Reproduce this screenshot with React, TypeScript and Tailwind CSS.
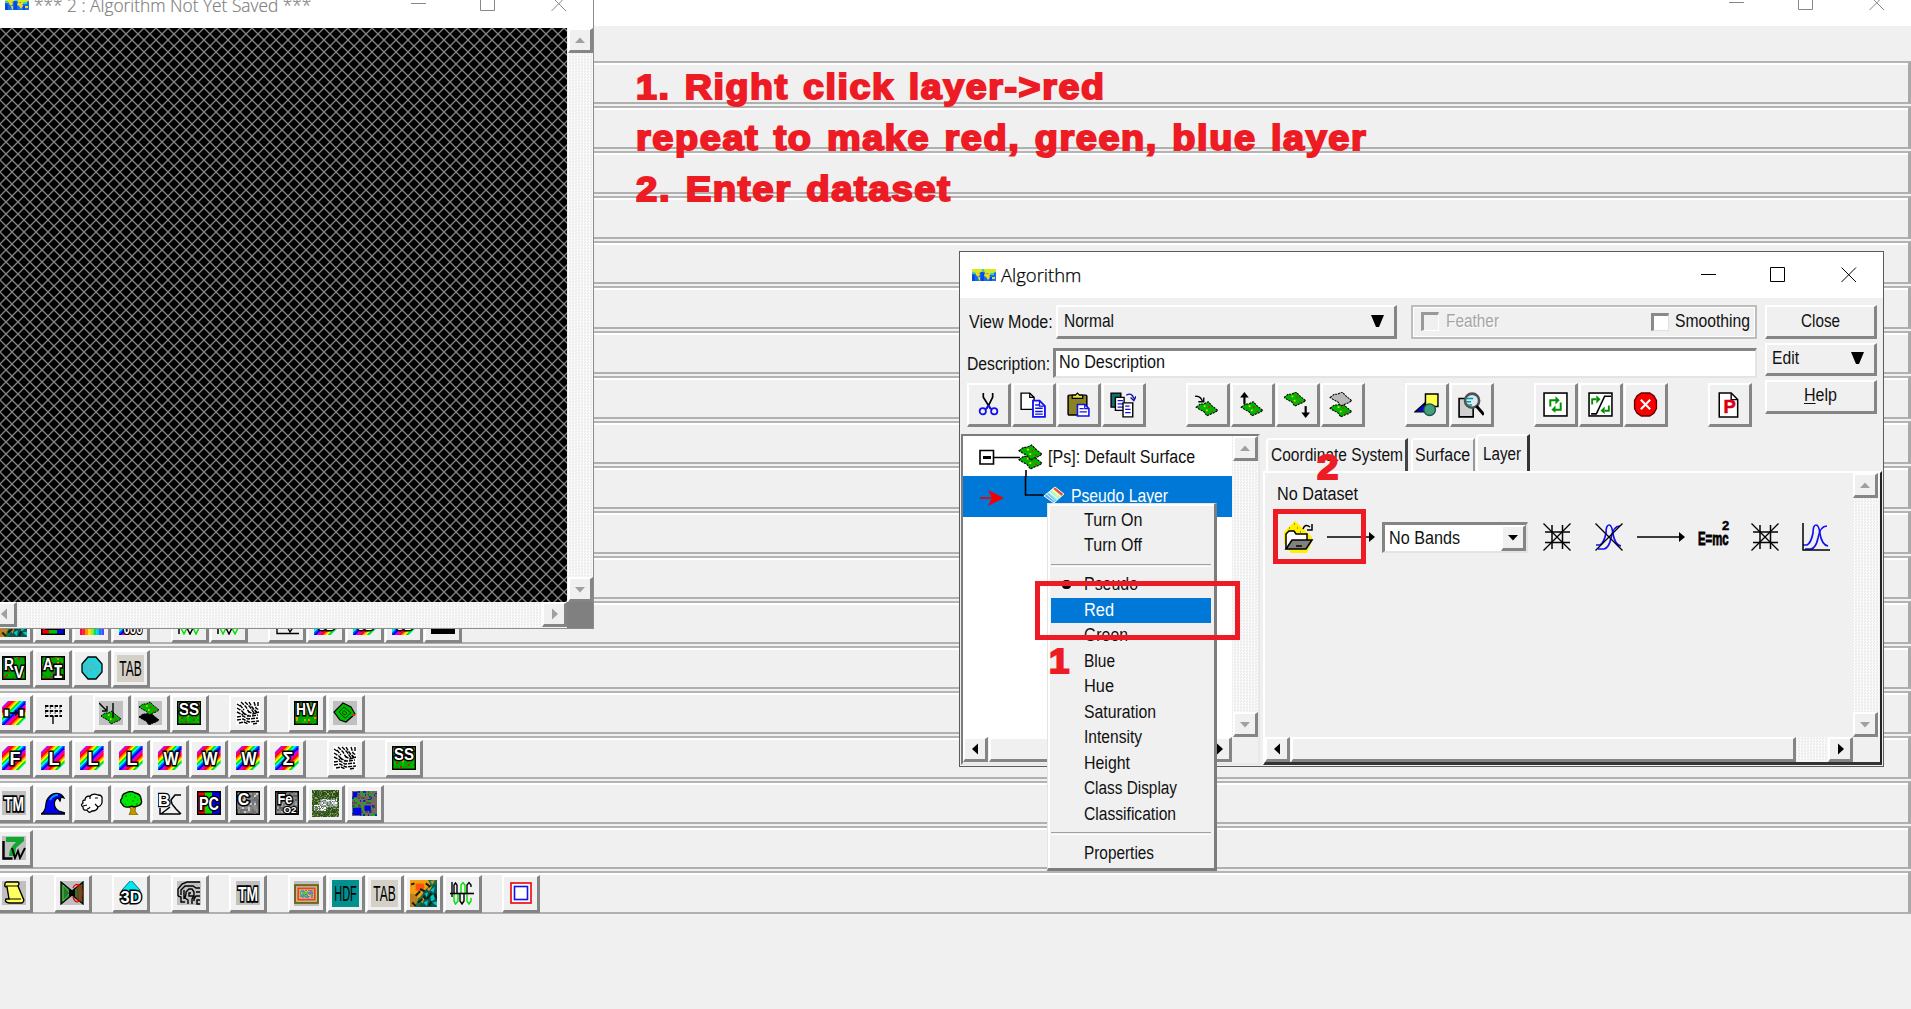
import React, { useLayoutEffect, useRef, useState } from "react";

const RAISED = "bg-[#f0f0f0] border-t-2 border-l-2 border-b-[3px] border-r-[3px] border-t-white border-l-white border-b-[#858585] border-r-[#858585]";
const TRACK = "bg-[repeating-conic-gradient(#fafafa_0%_25%,#ececec_0%_50%)] bg-[length:3px_3px]";

/** A line of text stretched or squeezed to a given width. */
function Fit({ w, children, className = "" }: { w: number; children: React.ReactNode; className?: string }) {
  const ref = useRef<HTMLSpanElement>(null);
  const [s, setS] = useState(1);
  useLayoutEffect(() => {
    if (ref.current) setS(w / ref.current.offsetWidth);
  }, [w]);
  return (
    <span className={"block shrink-0 whitespace-nowrap " + className} style={{ width: w }}>
      <span ref={ref} className="inline-block origin-left" style={{ transform: `scaleX(${s})` }}>
        {children}
      </span>
    </span>
  );
}

function rng(seed: number) {
  let a = seed;
  return () => {
    a = (a * 1664525 + 1013904223) % 4294967296;
    return a / 4294967296;
  };
}

function Noise({ colors, seed = 1, x = 0, y = 0, w = 24, h = 24, step = 2 }: { colors: string[]; seed?: number; x?: number; y?: number; w?: number; h?: number; step?: number }) {
  const r = rng(seed * 7919);
  const out: React.ReactNode[] = [];
  for (let j = 0; j < h; j += step)
    for (let i = 0; i < w; i += step)
      out.push(<rect key={`${i}-${j}`} x={x + i} y={y + j} width={step} height={step} fill={colors[Math.floor(r() * colors.length)]} />);
  return <g shapeRendering="crispEdges">{out}</g>;
}

function Svg({ children, s = 24, className = "" }: { children: React.ReactNode; s?: number; className?: string }) {
  return (
    <svg width={s} height={s} viewBox="0 0 24 24" fill="none" className={"block shrink-0 " + className}>
      {children}
    </svg>
  );
}

function Glyph({ x = 12, y = 19, size = 18, children, fill = "#fff", stroke = "#000", sw = 3, w, mono = false }: { x?: number; y?: number; size?: number; children: string; fill?: string; stroke?: string; sw?: number; w?: number; mono?: boolean }) {
  return (
    <text x={x} y={y} fontSize={size} textAnchor="middle" fontWeight="700" fontFamily={mono ? "DejaVu Sans Mono, monospace" : "Liberation Sans, sans-serif"} fill={fill} stroke={stroke} strokeWidth={sw} paintOrder="stroke" strokeLinejoin="miter" textLength={w} lengthAdjust="spacingAndGlyphs">
      {children}
    </text>
  );
}

const GREENS = ["#00a800", "#00b000", "#009a00", "#00a800", "#10b800", "#00a800", "#00a000", "#00a800", "#c8a000", "#00a800", "#00a800", "#a03000"];

function GreenBox({ a, b, seed = 1 }: { a: string; b: string; seed?: number }) {
  const pair = a + b;
  const staggered = pair === "RV" || pair === "AI";
  return (
    <Svg>
      <Noise colors={GREENS} seed={seed} />
      <rect x=".7" y=".7" width="22.6" height="22.6" stroke="#000" strokeWidth="1.4" />
      <Glyph x={7} y={14} size={17} w={10}>{a}</Glyph>
      <Glyph x={17} y={staggered ? 22 : 14} size={17} w={b === "I" ? undefined : 10} mono={b === "I"}>{b}</Glyph>
    </Svg>
  );
}

const HUES = ["#ff0000", "#ff9000", "#ffff00", "#00e000", "#00ffff", "#0060ff", "#0000e0", "#c000ff", "#ff0080"];

function Stripes() {
  return (
    <g strokeWidth="2.5">
      {Array.from({ length: 23 }, (_, i) => (
        <line key={i} x1={i * 2.3 - 27} y1="25" x2={i * 2.3 - 1} y2="-1" stroke={HUES[(i + 3) % HUES.length]} />
      ))}
    </g>
  );
}

function Rainbow({ t, small = false }: { t?: string; small?: boolean }) {
  return (
    <Svg className="[clip-path:polygon(28%_0,100%_0,100%_72%,72%_100%,0_100%,0_28%)]">
      <Stripes />
      {t && <Glyph x={13} y={19} size={small ? 13 : 18} w={t === "W" ? 15 : undefined}>{t}</Glyph>}
      {!t && (
        <g>
          <path d="M2 8h5v8H2zM17 8h5v8h-5z" fill="#fff" stroke="#000" strokeWidth="1.4" />
          <path d="M8 12h8M13 9.5l3 2.5-3 2.5" stroke="#000" strokeWidth="1.4" />
        </g>
      )}
    </Svg>
  );
}

function Ripples() {
  return (
    <Svg>
      <rect width="24" height="24" fill="#fff" />
      <g stroke="#000" strokeWidth="1.4" strokeDasharray="4 1">
        <path d="M1 3l3 2M1 7l5 3 3 4M1 11l6 3M5 1l5 5 4 7M9 1l5 5 4 6M13 1l3 5 5 6M18 1l2 6 3 2M22 1v4" />
        <path d="M1 16l6-1 5 3 10-1M1 19l6-1 6 3 10-1M3 22l5-1 4 2M11 15l5 0 6-1M7 12l6 3M12 10l5 3 6-2M17 23l5-1M4 4l4 5M19 9l3 4" />
      </g>
    </Svg>
  );
}

const slab = (x: number, y: number) => `M${x} ${y + 5}l4-3 3 0 4-2 4 4 5 4-3 2-3 1-4 2-3-4-4-2z`;

function Slab({ x, y, fill = "#00b400" }: { x: number; y: number; fill?: string }) {
  return (
    <g>
      <path d={slab(x, y)} fill={fill} stroke="#000" strokeWidth="1" strokeDasharray="2 .8" />
      {fill === "#00b400" && (
        <g>
          <path d={`M${x + 7} ${y + 4}h1.6M${x + 9} ${y + 8}h1.6`} stroke="#e8e000" strokeWidth="1.5" />
          <path d={`M${x + 11} ${y + 5}h1.6M${x + 14} ${y + 9}h1.6`} stroke="#c03000" strokeWidth="1.5" />
        </g>
      )}
    </g>
  );
}

function Tab({ t, bg }: { t: string; bg: string }) {
  return (
    <Svg s={27}>
      <rect width="24" height="24" fill={bg} />
      <text x="2" y="18.500" fontSize="19" fontFamily="Liberation Sans, sans-serif" fill="#000" textLength="20" lengthAdjust="spacingAndGlyphs">{t}</text>
    </Svg>
  );
}

function Wave({ low = false }: { low?: boolean }) {
  return (
    <Svg>
      {low ? (
        <g strokeWidth="1.5">
          <path d="M2 15v8" stroke="#000" />
          <path d="M3 15l4 8 4-8" stroke="#00e000" />
          <path d="M9 15l4 8 4-8" stroke="#000" />
          <path d="M15 15l4 8 4-8" stroke="#00e000" />
        </g>
      ) : (
        <g strokeWidth="1.400">
          <path d="M2 1v15" stroke="#000" />
          <path d="M4 12V4l1.500-2L7 4v8M10 12v8l2 3 2-3v-8M17 12V4l2-2.500 2 2.500v2" stroke="#000" />
          <path d="M4 12v8l1.500 3L8 20v-8M11 12V4l2-2.500L15 4v8M17 12v8l2 3 2-3v-3" stroke="#00e000" />
          <path d="M0 12.500h24" stroke="#000" strokeWidth="1.6" />
        </g>
      )}
    </Svg>
  );
}

const I: Record<string, React.ReactNode> = {
  rv: <GreenBox a="R" b="V" seed={2} />,
  ai: <GreenBox a="A" b="I" seed={3} />,
  ss: <GreenBox a="S" b="S" seed={4} />,
  hv: <GreenBox a="H" b="V" seed={5} />,
  octo: (
    <Svg>
      <path d="M8 1h8l6 7v8l-6 7H8l-6-7V8z" fill="#20d4dc" />
      <Noise x={4} y={5} w={16} h={14} step={1} colors={["#10e0e8", "#50b8c0"]} seed={8} />
      <path d="M8 1h8l6 7v8l-6 7H8l-6-7V8z" stroke="#000" strokeWidth="1.3" />
    </Svg>
  ),
  tab: <Tab t="TAB" bg="#d4d0c8" />,
  hdf: <Tab t="HDF" bg="#009090" />,
  shift: <Rainbow />,
  dots: (
    <Svg>
      <path d="M4 5h17M4 10h17M4 15h17" stroke="#000" strokeWidth="1.8" strokeDasharray="3.4 1.4" />
      <path d="M4 7h17M4 12h17" stroke="#000" strokeWidth="1.2" strokeDasharray="1.2 3.6" />
      <path d="M12 15v8" stroke="#000" strokeWidth="1.4" />
    </Svg>
  ),
  drop: (
    <Svg>
      <rect width="24" height="24" fill="#c0c0c0" />
      <Slab x={2} y={10} />
      <path d="M0 2l7 7M8 5v5H3M14 2v15" stroke="#000" strokeWidth="1.4" />
    </Svg>
  ),
  shadow: (
    <Svg>
      <rect width="24" height="24" fill="#c0c0c0" />
      <Slab x={1} y={11} fill="#000" />
      <Slab x={1} y={1} />
    </Svg>
  ),
  ripple: <Ripples />,
  diamond: (
    <Svg>
      <rect width="24" height="24" fill="#c0c0c0" />
      <path d="M10 2l8 4 4 7-9 8-6-2-6-8z" fill="#00b800" stroke="#000" strokeWidth="1.2" />
      <path d="M11 6l7 6-6 5-6-6z" stroke="#003800" strokeWidth="1" />
      <path d="M11 9.500l3 2.500-2 2-3-2z" stroke="#003800" strokeWidth=".8" />
      <path d="M19 14h3" stroke="#c04000" strokeWidth="2" />
    </Svg>
  ),
  F: <Rainbow t="F" />,
  L: <Rainbow t="L" />,
  W: <Rainbow t="W" />,
  S: <Rainbow t="Σ" />,
  D: <Rainbow t="JD" small />,
  tm: (
    <Svg>
      <rect width="24" height="24" fill="#c0c0c0" />
      <Glyph x={12} y={20} size={20} sw={3.4} w={20}>TM</Glyph>
    </Svg>
  ),
  wave: (
    <Svg>
      <path d="M0 23C8 18 2 12 8 6C12 1 20 1 23 7L20 6L19 10L17 7C12 9 12 17 18 20L24 22V23Z" fill="#0000f0" stroke="#000" strokeWidth="1.3" />
      <path d="M9 9q3-5 8-5" stroke="#0090ff" strokeWidth="2" />
    </Svg>
  ),
  cloud: (
    <Svg>
      <path d="M5 9q0-4 5-4 3-3 8-1 5 0 4 5 1 5-4 7-1 4-6 4-3 3-5-1-4 1-4-3-3-2 0-4-1-3 2-3z" fill="#fff" stroke="#000" strokeWidth="1.3" />
      <path d="M10 5v3M18 16l-3-3M7 18q2 0 3-2M15 7h3M3 15l4-1" stroke="#000" strokeWidth="1.2" />
    </Svg>
  ),
  tree: (
    <Svg>
      <path d="M10 15l2 4-2 5h9l-3-4 1-5z" fill="#c09800" stroke="#605000" strokeWidth=".7" />
      <path d="M7 2q5-3 9 0 6 1 6 6 2 5-3 7l-4 1-2-1-3 1q-5 1-7-3-3-3 0-6 0-4 4-5z" fill="#00e800" stroke="#000" strokeWidth="1.3" />
      <path d="M6 5h2M11 4h1M15 6h2M8 9h1M13 10h2M18 9h1M6 13h1M17 13h2" stroke="#007000" strokeWidth="1.2" />
    </Svg>
  ),
  bc: (
    <Svg>
      <Glyph x={6} y={15} size={17} sw={2.6}>B</Glyph>
      <path d="M23 4h-6l-4 5 1 4 4 5 5 5M2 17v6h20M3 23l9-7" stroke="#000" strokeWidth="1.5" />
    </Svg>
  ),
  pc: (
    <Svg>
      <rect x="1" y="1" width="7" height="22" fill="#f00000" />
      <rect x="8" y="1" width="7" height="22" fill="#00e000" />
      <rect x="15" y="1" width="8" height="22" fill="#0000f0" />
      <rect x=".7" y=".7" width="22.6" height="22.6" stroke="#000" strokeWidth="1.5" />
      <Glyph x={12} y={19} size={19} w={20}>PC</Glyph>
    </Svg>
  ),
  c: (
    <Svg>
      <Noise colors={["#808080", "#909090", "#707070", "#c8c8c8", "#888888"]} seed={11} />
      <rect x=".7" y=".7" width="22.6" height="22.6" stroke="#000" strokeWidth="1.5" />
      <Glyph x={7.5} y={13.5} size={16}>C</Glyph>
    </Svg>
  ),
  fe: (
    <Svg>
      <Noise colors={["#808080", "#909090", "#606060", "#a8a8a8"]} seed={12} />
      <rect x=".7" y=".7" width="22.6" height="22.6" stroke="#000" strokeWidth="1.5" />
      <Glyph x={10} y={13} size={15} w={15}>Fe</Glyph>
      <Glyph x={15} y={22} size={9} w={13} sw={2.2}>O2</Glyph>
    </Svg>
  ),
  photo: (
    <Svg s={27}>
      <Noise step={1} colors={["#2c4a1c", "#3c6a20", "#507038", "#385818", "#2c4a1c", "#88a070"]} seed={13} />
      <Noise x={2} y={13} w={10} h={6} step={1} colors={["#d8d8e0", "#607848", "#ffffff", "#8898a8"]} seed={19} />
      <Noise x={7} y={8} w={15} h={7} step={1} colors={["#c8c8d8", "#607848", "#ffffff", "#8898a8", "#a0b0b0"]} seed={21} />
    </Svg>
  ),
  classes: (
    <Svg s={25}>
      <Noise colors={["#706868", "#806858", "#00c000", "#505058", "#707058", "#2020c0", "#806060"]} seed={14} step={1.5} />
      <path d="M1 16h8v7H1zM12 14h6v5h-6zM1 1h4v5H1z" fill="#0000f0" />
    </Svg>
  ),
  seven: (
    <Svg>
      <rect width="24" height="24" fill="#c0c0c0" />
      <path d="M4 1h18v4l-8 7-1 8-6 0q0-8 7-14H4z" fill="#10a830" />
      <path d="M1.5 5v17.500h9" stroke="#000" strokeWidth="2.4" />
      <path d="M10 12l3 10 3-7 2 7 5-10" stroke="#000" strokeWidth="1.900" />
    </Svg>
  ),
  scroll: (
    <Svg>
      <rect width="24" height="24" fill="#c0c0c0" />
      <path d="M3 3q0-2 2-2h11q2 1 0 4l5 12q2 3-1 5H7q-5-1-3-4h3L5 6Q2 6 3 3z" fill="#ffff60" stroke="#000" strokeWidth="1.4" />
      <path d="M4 5h12M7 18h12" stroke="#000" strokeWidth="1.2" />
    </Svg>
  ),
  bow: (
    <Svg>
      <rect width="24" height="24" fill="#c0c0c0" />
      <path d="M1 1l11 9L23 1v22l-11-9L1 23z" fill="#20782c" stroke="#000" strokeWidth="1.2" />
      <path d="M3 4v16l7-8zM9 9l6 6" stroke="#60c040" strokeWidth="1" />
      <path d="M9 9h6v6H9z" fill="#000" />
      <path d="M13 7q2-5 6-3 4 4 3 10-1 7-5 7-3-1-4-5M18 4v17" stroke="#f00000" strokeWidth="1.2" />
    </Svg>
  ),
  three: (
    <Svg>
      <path d="M12-1l9 10v10H3V9z" fill="#00e8f0" stroke="#007080" strokeWidth="1" />
      <Glyph x={12} y={22} size={17} w={21}>3D</Glyph>
    </Svg>
  ),
  head: (
    <Svg>
      <rect width="24" height="24" fill="#c0c0c0" />
      <path d="M1 15V8l4-5 5-2h13M4 14V9l4-4h8l3 2h4M1 15l3 1v5h4M9 13l-1 4 3 2v4M9 13v-2l3-3h3l2 3v4h-5v-3h2M19 11h4M17 15l-2 3v5M23 15h-4l-2 3v2M23 19h-3v4h3M7 9v9" stroke="#000" strokeWidth="1.400" />
    </Svg>
  ),
  frame: (
    <Svg s={25}>
      <rect width="24" height="24" fill="#c0c0c0" />
      <rect x="1" y="4" width="22" height="17" fill="#c8c8a0" stroke="#706820" strokeWidth="2" />
      <rect x="4" y="7" width="16" height="11" fill="#e0a080" stroke="#f04020" strokeWidth="1.6" />
      <Noise x={6} y={9} w={12} h={7} step={1} colors={["#60c040", "#e8c040", "#a060c0", "#40a0c0"]} seed={16} />
    </Svg>
  ),
  relief: (
    <Svg s={27}>
      <rect width="24" height="24" fill="#187048" />
      <path d="M0 0h16l2 4-5 6-4 5-4 3-5-2z" fill="#f0a010" />
      <path d="M5 3l7 0 1 4-4 3-4-1z" fill="#ff5010" />
      <path d="M0 12l6 1 1 5-3 6H0z" fill="#c08020" />
      <path d="M12 10l5-4 7-3v21H8l3-6z" fill="#0c5850" />
      <path d="M18 1l4-1-2 4zM15 8l5-3-3 5zM9 17l4-1-2 5z" fill="#e09020" />
      <path d="M13 12l3-1-1 4zM18 9l4-3-1 5zM12 20l4-2-1 5zM18 14l3-1 1 4-3 2zM20 20l4-1v4z" fill="#00c8c8" />
      <path d="M1 4l3-1M9 8l4 2M5 14l4-4M14 3l4 3M7 20l4-3M15 17l4-5M22 12l2 5M17 23l2-4M2 20l3 3M12 14l2 3" stroke="#102010" strokeWidth="1.800" />
    </Svg>
  ),
  sine: <Wave />,
  sine2: <Wave low />,
  squares: (
    <Svg>
      <rect x="2" y="2" width="20" height="20" fill="#fff" stroke="#f01010" strokeWidth="1.7" />
      <rect x="5.500" y="5.500" width="13" height="13" stroke="#1010f0" strokeWidth="1.6" />
    </Svg>
  ),
  rgb: (
    <Svg>
      <rect width="24" height="24" fill="#0000e0" />
      <rect width="10" height="24" fill="#f00000" />
      <rect x="8" y="17" width="8" height="6" fill="#00c000" />
      <rect x="5" y="5" width="14" height="13" fill="#fff" stroke="#000" strokeWidth="2" />
      <rect x=".7" y=".7" width="22.600" height="22.600" stroke="#000" strokeWidth="1.400" />
    </Svg>
  ),
  spec: (
    <Svg>
      {["#ff0060", "#ff3000", "#ff9000", "#ffe000", "#a0f000", "#00e060", "#00d0e0", "#0080ff", "#6040ff"].map((c, i) => (
        <rect key={c} x={i * 2.7} width="2.8" height="24" fill={c} />
      ))}
    </Svg>
  ),
  ooo: (
    <Svg>
      <Stripes />
      <rect x="12" width="12" height="24" fill="#f0f0f0" />
      <Glyph x={14} y={23} size={16} w={19} sw={2.5}>000</Glyph>
    </Svg>
  ),
  vee: (
    <Svg>
      <path d="M2 0v22.500h22M10 12l5 9 6-9" stroke="#000" strokeWidth="1.400" />
    </Svg>
  ),
  black: (
    <Svg>
      <rect width="24" height="23" fill="#000" />
    </Svg>
  ),
};

const NO_ICONS: string[] = [];
const ROWS: string[][] = [
  ...Array.from({ length: 12 }, () => NO_ICONS),
  ["relief", "rgb", "spec", "ooo", "-", "sine2", "sine2", "-", "vee", "D", "D", "D", "black"],
  ["rv", "ai", "octo", "tab"],
  ["shift", "dots", "-", "drop", "shadow", "ss", "-", "ripple", "-", "hv", "diamond"],
  ["F", "L", "L", "L", "W", "W", "W", "S", "-", "ripple", "-", "ss"],
  ["tm", "wave", "cloud", "tree", "bc", "pc", "c", "fe", "photo", "classes"],
  ["seven"],
  ["scroll", "-", "bow", "-", "three", "-", "head", "-", "tm", "-", "frame", "hdf", "tab", "relief", "sine", "-", "squares"],
];

function ToolRow({ items }: { items: string[] }) {
  return (
    <div className="flex h-[45px] flex-col">
      <div className="flex h-[43px] border-t-2 border-r-[3px] border-b-2 border-t-[#b4b4b4] border-r-[#a9a9a9] border-b-[#b0b0b0] shadow-[inset_0_2px_0_#fff]">
        <div className="-ml-[5px] flex gap-px pt-[2px]">
          {items.map((k, i) =>
            k === "-" ? (
              <span key={i} className="w-[18.500px]" />
            ) : (
              <span key={i} className={"flex h-[38px] w-[38px] items-center justify-center overflow-hidden " + RAISED}>
                {I[k]}
              </span>
            ),
          )}
        </div>
      </div>
    </div>
  );
}

function Tri({ d, c = "#a0a0a0" }: { d: "u" | "d" | "l" | "r"; c?: string }) {
  const p = { u: "M1 9L6 3.500l5 5.500z", d: "M1 4l5 5.500L11 4z", l: "M9 .5L3 6l6 5.500z", r: "M4 .5L10 6l-6 5.500z" }[d];
  return (
    <svg width="12" height="12" viewBox="0 0 12 12">
      <path d={p} fill={c} />
    </svg>
  );
}

function SB({ d, c }: { d: "u" | "d" | "l" | "r"; c?: string }) {
  return (
    <span className={"flex h-[25px] w-[25px] shrink-0 items-center justify-center " + RAISED}>
      <Tri d={d} c={c} />
    </span>
  );
}

function Down() {
  return (
    <svg width="13" height="12" viewBox="0 0 13 12">
      <path d="M0 0h13L8 12H5z" fill="#000" />
    </svg>
  );
}

function WinButtons({ color }: { color: string }) {
  return (
    <svg width="156" height="16" viewBox="0 0 156 16" fill="none" stroke={color} strokeWidth="1" className="block">
      <path d="M0 7.500h15M69.500.5h14v14h-14zM140.500.5l14.500 14.500M155 .5L140.500 15" />
    </svg>
  );
}

function Globe() {
  return (
    <svg width="24" height="12" viewBox="0 0 24 12" className="block shrink-0">
      <rect width="24" height="12" fill="#1070f0" />
      <path d="M0 0h24v3l-3 1-1 2-3 0-1-2-3 0-1-2-3 1-2 1-3 0-4-1z" fill="#d8e820" />
      <path d="M3 3l4 0 1 3-2 2-2-2zM6 8l2 0 0 3-1 1zM13 4l4 1 1 3-2 3-2-3-2-1zM20 8l3 0v2h-3z" fill="#f0d820" />
      <path d="M0 5l3 2v5H0zM9 3l3 1v8H9zM18 8h2v4h-2z" fill="#0848e8" />
      <path d="M10 0h2v3h-2zM18 4h4v2h-4zM0 3h3v2H0z" fill="#40d0a0" />
    </svg>
  );
}

const DLG: Record<string, React.ReactNode> = {
  cut: (
    <Svg s={25}>
      <path d="M7 1v4l5 8 4-8V1M12 13l-2 3M12 13l2 3" stroke="#000" strokeWidth="1.600" />
      <circle cx="6.500" cy="18.500" r="3" stroke="#1010f0" strokeWidth="1.700" />
      <circle cx="17.500" cy="18.500" r="3" stroke="#1010f0" strokeWidth="1.700" />
      <path d="M9 17l3-4M15 17l-3-4" stroke="#1010f0" strokeWidth="1.700" />
    </Svg>
  ),
  copy: (
    <Svg s={26}>
      <path d="M1 1h8l4 4v11H1z" fill="#fff" stroke="#000" strokeWidth="1.300" />
      <path d="M9 1v4h4" stroke="#000" strokeWidth="1.200" />
      <path d="M12 8h6l5 5v10H12z" fill="#fff" stroke="#1010f0" strokeWidth="1.700" />
      <path d="M14 12h4M14 15h7M14 18h7M14 20.500h7M18 8v5h5" stroke="#1010f0" strokeWidth="1.200" />
    </Svg>
  ),
  paste: (
    <Svg s={25}>
      <rect x="2" y="3" width="18" height="19" rx="1" fill="#8a8420" stroke="#000" strokeWidth="1.400" />
      <path d="M6 6V3h3l2-2 2 2h3v3z" fill="#e8e040" stroke="#000" strokeWidth="1.200" />
      <path d="M11 12h7l4 4v7H11z" fill="#fff" stroke="#1010f0" strokeWidth="1.500" />
      <path d="M13 16h4M13 19h7M18 12v4h4" stroke="#1010f0" strokeWidth="1.200" />
    </Svg>
  ),
  dup: (
    <Svg s={26}>
      <path d="M1 1h9v13H1z" fill="#107070" stroke="#000" strokeWidth="1.300" />
      <path d="M5 5h8v12H5z" fill="#fff" stroke="#000" strokeWidth="1.300" />
      <path d="M7 8h5M7 11h5M7 14h5" stroke="#1010f0" strokeWidth="1.200" />
      <path d="M12 10h9v13h-9z" fill="#fff" stroke="#000" strokeWidth="1.300" />
      <path d="M14 13h4M14 16h5M14 19h5" stroke="#1010f0" strokeWidth="1.200" />
      <path d="M15 3q5-3 7 3M19 5l3 3 2-4" stroke="#1010a0" strokeWidth="1.300" />
    </Svg>
  ),
  add: (
    <Svg s={26}>
      <Slab x={2} y={9} />
      <path d="M1 4q5-1 7 5M4 9h5V5" stroke="#000" strokeWidth="1.300" />
    </Svg>
  ),
  up: (
    <Svg s={26}>
      <Slab x={2} y={9} />
      <path d="M5 11V3" stroke="#000" strokeWidth="2" />
      <path d="M1 5l4-5 4 5z" fill="#000" />
    </Svg>
  ),
  down: (
    <Svg s={26}>
      <Slab x={0} y={0} />
      <path d="M20 13v8" stroke="#000" strokeWidth="2" />
      <path d="M16 19l4 5 4-5z" fill="#000" />
    </Svg>
  ),
  swap: (
    <Svg s={26}>
      <Slab x={1} y={10} />
      <Slab x={1} y={0} fill="#b8b8b8" />
    </Svg>
  ),
  shapes: (
    <Svg s={25}>
      <path d="M11 2h12v12H11z" fill="#ffff50" stroke="#000" strokeWidth="1.400" />
      <path d="M1 19l9-8v8z" fill="#0000f0" stroke="#000" strokeWidth="1.200" />
      <circle cx="15" cy="17" r="5.600" fill="#40a080" stroke="#205040" strokeWidth="1.300" />
    </Svg>
  ),
  find: (
    <Svg s={26}>
      <path d="M1 6h13v17H1z" fill="#d0d0d0" stroke="#000" strokeWidth="1.500" />
      <circle cx="13" cy="8" r="6.500" fill="#d8e8f0" stroke="#505050" strokeWidth="2.400" />
      <path d="M7 6h7M7 9h5M9 12h4" stroke="#0098a0" strokeWidth="1.500" />
      <path d="M17 13l7 8" stroke="#000" strokeWidth="2.800" />
    </Svg>
  ),
  refresh: (
    <Svg s={25}>
      <rect x="1" y="1" width="22" height="22" fill="#fff" stroke="#000" strokeWidth="1.500" />
      <path d="M7 14V8h6M17 10v7h-6" stroke="#009000" strokeWidth="1.900" />
      <path d="M12 4l4 4-4 4zM12 13v7l-4-3z" fill="#009000" />
    </Svg>
  ),
  refresh2: (
    <Svg s={25}>
      <rect x="1" y="1" width="22" height="22" fill="#fff" stroke="#000" strokeWidth="1.500" />
      <path d="M4 12V7h4M20 13v5h-4" stroke="#009000" strokeWidth="1.800" />
      <path d="M8 3l4 4-4 4zM16 14v7l-4-3z" fill="#009000" />
      <path d="M3 21h5l8-17h6" stroke="#000" strokeWidth="1.500" />
    </Svg>
  ),
  stop: (
    <Svg s={25}>
      <path d="M8 1h8l4 2.500 2.500 4.500v8L20 20.500 16 23H8l-4-2.500L1.500 16V8L4 3.500z" fill="#f80000" stroke="#600000" strokeWidth="1.300" />
      <path d="M7.500 7.500l9 9M16.500 7.500l-9 9" stroke="#fff" strokeWidth="2" />
    </Svg>
  ),
  page: (
    <Svg s={26}>
      <path d="M3 1h11l6 6v16H3z" fill="#fff" stroke="#000" strokeWidth="1.400" />
      <path d="M14 1v6h6" stroke="#000" strokeWidth="1.300" />
      <text x="12.500" y="19.500" fontSize="17" fontWeight="700" textAnchor="middle" fontFamily="Liberation Sans, sans-serif" fill="#d80010" stroke="#d80010" strokeWidth=".5">P</text>
    </Svg>
  ),
};

const TOOLS = [["cut", "copy", "paste", "dup"], ["add", "up", "down", "swap"], ["shapes", "find"], ["refresh", "refresh2", "stop"], ["page"]];

function GridX() {
  return (
    <svg width="28" height="28" viewBox="0 0 28 28" stroke="#000" fill="none" strokeWidth="1.500" className="block">
      <path d="M.5.5l27 27M27.500.5l-27 27" strokeWidth="1.300" />
      <path d="M2 9h25M2 19.500h25M9 2v24M19.500 2v24" />
    </svg>
  );
}

function Curve({ crossed = false }: { crossed?: boolean }) {
  return (
    <svg width="28" height="28" viewBox="0 0 28 28" fill="none" className="block">
      <path d="M1 22h4Q9 20 11 10Q11 2 14 2Q17 2 18 11Q20 22 26 23" stroke="#1010f0" strokeWidth="1.700" />
      <path d="M3 26h6Q14 25 16 15Q18 3 25 3" stroke="#1010f0" strokeWidth="1.700" />
      {crossed ? <path d="M.5.5l27 27M27.500.5l-27 27" stroke="#000" strokeWidth="1.300" /> : <path d="M1 0v27h27" stroke="#000" strokeWidth="1.500" />}
    </svg>
  );
}

function Arrow() {
  return (
    <svg width="48" height="14" viewBox="0 0 48 14" className="block">
      <path d="M0 7h43" stroke="#000" strokeWidth="1.500" />
      <path d="M42 2l6 5-6 5z" fill="#000" />
    </svg>
  );
}

type Item = [string, number] | null;
const MENU: Item[] = [["Turn On", 58], ["Turn Off", 58], null, ["Pseudo", 54], ["Red", 30], ["Green", 44], ["Blue", 31], ["Hue", 30], ["Saturation", 72], ["Intensity", 58], ["Height", 46], ["Class Display", 93], ["Classification", 92], null, ["Properties", 70]];

function ContextMenu() {
  return (
    <div className="absolute top-[503px] left-[1047px] h-[368px] w-[170px] border-t border-r-[3px] border-b-[3px] border-l border-t-[#e4e4e4] border-r-[#7c7c7c] border-b-[#7c7c7c] border-l-[#e4e4e4] bg-[#f0f0f0] px-[3px] pt-[3.500px] pr-[3px] shadow-[inset_2px_2px_0_#fff]">
      {MENU.map((m, i) =>
        m ? (
          <div key={i} className={"flex h-[25.500px] items-center pb-[1.500px] pl-[10px] " + (m[0] === "Red" ? "bg-[#0078d7] text-white" : "")}>
            <span className="flex w-[23px]">{m[0] === "Pseudo" && <span className="ml-px h-[9px] w-[9px] rounded-[4px] bg-black" />}</span>
            <Fit w={m[1]}>{m[0]}</Fit>
          </div>
        ) : (
          <div key={i} className="flex h-[13.500px] items-center">
            <span className="h-[3px] w-full border-t-[1.500px] border-b border-t-[#a0a0a0] border-b-white" />
          </div>
        ),
      )}
    </div>
  );
}

function Dialog() {
  return (
    <div className="absolute top-[251px] left-[959px] flex h-[516px] w-[925px] flex-col border border-[#5c5c5c] bg-[#f0f0f0]">
      <div className="flex h-[46px] shrink-0 items-center bg-white pb-px pl-[12px]">
        <Globe />
        <Fit w={80} className="ml-[5px] font-['Open_Sans',sans-serif] text-[18px] font-light text-black [-webkit-text-stroke:0.25px_#000]">Algorithm</Fit>
        <span className="mr-[26px] ml-auto">
          <WinButtons color="#000" />
        </span>
      </div>

      <div className="flex h-[136px] shrink-0">
        <div className="w-[797px]">
          <div className="flex h-[41px] items-center pt-[7px] pl-[9px]">
            <Fit w={84}>View Mode:</Fit>
            <div className={"ml-[3px] flex h-[34px] w-[341px] items-center justify-between pr-[10px] pb-px pl-[6px] " + RAISED}>
              <Fit w={50} className="pb-px">Normal</Fit>
              <Down />
            </div>
            <div className="ml-[14px] flex h-[34px] w-[346px] items-center border-2 border-[#bdbdbd] pb-px pl-[8px] shadow-[inset_1px_1px_0_#fff,inset_-1px_-1px_0_#fff]">
              <span className="h-[19px] w-[18px] border-t-[3px] border-r border-b border-l-[3px] border-[#999] border-r-white border-b-white" />
              <Fit w={53} className="ml-[7px] pb-px text-[#a6a6a6] [text-shadow:1px_1px_0_#fff]">Feather</Fit>
              <span className="ml-[152px] h-[18px] w-[18px] border-t-[3px] border-r border-b border-l-[3px] border-[#8a8a8a] border-r-[#e0e0e0] border-b-[#e0e0e0] bg-white" />
              <Fit w={75} className="ml-[6px] pb-px">Smoothing</Fit>
            </div>
          </div>
          <div className="mt-[9px] flex h-[30px] items-center pl-[7px]">
            <Fit w={83} className="pt-[2px]">Description:</Fit>
            <div className="ml-[3px] flex h-[30px] w-[704px] items-center border-t-[3px] border-r-2 border-b-2 border-l-[3px] border-t-[#858585] border-r-[#e4e4e4] border-b-[#e4e4e4] border-l-[#858585] bg-white pb-[3px] pl-[3px]">
              <Fit w={106}>No Description</Fit>
            </div>
          </div>
          <div className="mt-[5px] flex gap-[40px] pl-[7px]">
            {TOOLS.map((g, i) => (
              <div key={i} className="flex gap-px">
                {g.map((k) => (
                  <span key={k} className={"flex h-[44px] w-[44px] items-center justify-center pr-px " + RAISED}>
                    {DLG[k]}
                  </span>
                ))}
              </div>
            ))}
          </div>
        </div>
        <div className="ml-[8px] flex w-[112px] flex-col gap-[4px] pt-[7px]">
          <div className={"flex h-[34px] items-center justify-center pb-[2px] " + RAISED}>
            <Fit w={39}>Close</Fit>
          </div>
          <div className={"flex h-[33px] items-center justify-between pr-[10px] pb-[2px] pl-[5px] " + RAISED}>
            <Fit w={27}>Edit</Fit>
            <Down />
          </div>
          <div className={"flex h-[34px] items-center justify-center pb-[3px] " + RAISED}>
            <Fit w={33}>
              <span className="underline underline-offset-2">H</span>elp
            </Fit>
          </div>
        </div>
      </div>

      <div className="flex h-[332px] pl-px">
        <div className="flex h-[331px] w-[299px] flex-col border-2 border-t-[#7c7c7c] border-r-[#e8e8e8] border-b-[#e8e8e8] border-l-[#7c7c7c]">
          <div className="flex h-[301px]">
            <div className="w-[269px] bg-white">
              <div className="flex h-[40px] items-center pt-px pl-[16px]">
                <svg width="64" height="40" viewBox="0 0 64 40" fill="none" className="shrink-0">
                  <path d="M1 13.500h13.500v13.500H1zM15 20.500h26M47 33v7" stroke="#000" strokeWidth="1.600" />
                  <path d="M4 20.500h8" stroke="#000" strokeWidth="3" />
                  <g transform="translate(40 17) scale(1.15)"><Slab x={0} y={0} /></g>
                  <g transform="translate(40 8) scale(1.15)"><Slab x={0} y={0} /></g>
                </svg>
                <Fit w={147} className="ml-[5px]">[Ps]: Default Surface</Fit>
              </div>
              <div className="flex h-[41px] items-center bg-[#0078d7] pl-[16px] text-white">
                <svg width="87" height="41" viewBox="0 0 87 41" fill="none" className="shrink-0">
                  <path d="M1 22h12" stroke="#f00000" strokeWidth="1.700" />
                  <path d="M9 14l16 8-16 8 4-8z" fill="#f00000" />
                  <path d="M46.500 0v19h18" stroke="#000" strokeWidth="1.600" />
                  <path d="M65 20l11-9 9 7-10 9z" fill="#60d8f0" />
                  <path d="M65 20l3-2.500 8 7.500-2 2z" fill="#60a8f0" />
                  <path d="M69 16.500l3-2.500 8 7-3 3z" fill="#a0f8e0" />
                  <path d="M72 14l2-1.500 8 7.500-2 2z" fill="#fff080" />
                  <path d="M74 12.500l2-1.500 9 7-2 2z" fill="#f05030" />
                  <path d="M70 16l9 7M73 13.500l9 7M67.500 18l8 7" stroke="#fff" strokeWidth=".9" />
                  <path d="M65 20l11-9 9 7-10 9z" stroke="#fff" strokeWidth=".9" />
                </svg>
                <Fit w={97} className="ml-[5px] pb-px">Pseudo Layer</Fit>
              </div>
            </div>
            <div className={"flex w-[26px] flex-col justify-between pl-px " + TRACK}>
              <SB d="u" />
              <SB d="d" />
            </div>
          </div>
          <div className="flex h-[25px] w-[269px]">
            <SB d="l" c="#000" />
            <span className={"ml-px h-[25px] flex-1 " + RAISED} />
            <SB d="r" c="#000" />
          </div>
        </div>

        <div className="ml-[3px] flex w-[619px] flex-col">
          <div className="flex h-[37px] items-end pl-[3px]">
            <span className="flex h-[33px] w-[142px] items-center rounded-tl-[4px] border-t-2 border-r-[3px] border-l-2 border-t-white border-r-[#444] border-l-white pl-[3px]">
              <Fit w={132} className="pb-px">Coordinate System</Fit>
            </span>
            <span className="ml-[3px] flex h-[33px] w-[64px] items-center rounded-tl-[4px] border-t-2 border-r-2 border-l-2 border-t-white border-r-[#999] border-l-white pl-[2px]">
              <Fit w={55} className="pb-px">Surface</Fit>
            </span>
            <span className="ml-px flex h-[37px] w-[54px] items-center rounded-tl-[4px] border-t-2 border-r-[3px] border-l-2 border-t-white border-r-[#333] border-l-white pl-[5px]">
              <Fit w={38}>Layer</Fit>
            </span>
          </div>
          <div className="flex h-[294px] flex-col border-t-2 border-r-2 border-b-[3px] border-l-2 border-t-white border-r-[#222] border-b-[#333] border-l-white">
            <div className="flex h-[264px]">
              <div className="w-[588px] pl-[12px]">
                <Fit w={81} className="mt-[9px]">No Dataset</Fit>
                <div className="mt-[15px] flex h-[32px] items-center pl-[6px]">
                  <svg width="31" height="32" viewBox="0 0 31 32" fill="none">
                    <path d="M1 11L12 0l17 16v4l-5 12H8l-7-10z" fill="#fff000" />
                    <path d="M6 7h1M11 3h1M14 7h1M9 10h1M17 11h1" stroke="#b07000" strokeWidth="1.500" />
                    <path d="M3 28V13l3-3h5l2 3h11v6" fill="#fff" stroke="#000" strokeWidth="1.500" />
                    <path d="M3 28l6-9h20l-6 9z" fill="#808080" stroke="#000" strokeWidth="1.600" />
                    <path d="M13 25h6" stroke="#000" strokeWidth="1.500" />
                    <path d="M20 8q2-6 7-2M24 9h5V3" stroke="#000" strokeWidth="1.500" />
                  </svg>
                  <span className="ml-[13px]"><Arrow /></span>
                  <div className="ml-[7px] flex h-[31px] w-[146px] items-center border-t-[3px] border-r-2 border-b-2 border-l-[3px] border-t-[#858585] border-r-[#e4e4e4] border-b-[#e4e4e4] border-l-[#858585] bg-white pl-[4px]">
                    <Fit w={71}>No Bands</Fit>
                    <span className={"ml-auto flex h-[26px] w-[25px] items-center justify-center " + RAISED}>
                      <Tri d="d" c="#000" />
                    </span>
                  </div>
                  <span className="ml-[15px]"><GridX /></span>
                  <span className="ml-[24px]"><Curve crossed /></span>
                  <span className="ml-[14px]"><Arrow /></span>
                  <span className="ml-[13px] flex w-[32px] text-black">
                    <Fit w={31} className="pt-[4px] text-[18px] leading-[24px] font-bold [-webkit-text-stroke:0.8px_#000]">E=mc</Fit>
                    <Fit w={7} className="-mt-[4px] -ml-[7px] text-[13px] leading-[14px] font-bold [-webkit-text-stroke:0.5px_#000]">2</Fit>
                  </span>
                  <span className="ml-[21px]"><GridX /></span>
                  <span className="ml-[23px]"><Curve /></span>
                </div>
              </div>
              <div className={"flex w-[26px] flex-col justify-between " + TRACK}>
                <SB d="u" />
                <SB d="d" />
              </div>
            </div>
            <div className="flex h-[25px]">
              <div className={"flex w-[588px] " + TRACK}>
                <SB d="l" c="#000" />
                <span className={"ml-px h-[25px] w-[505px] " + RAISED} />
                <span className="ml-auto"><SB d="r" c="#000" /></span>
              </div>
            </div>
          </div>
        </div>
      </div>
    </div>
  );
}

function AlgorithmView() {
  return (
    <div className="absolute top-0 left-0 h-[629px] w-[594px] overflow-hidden border-r border-b border-[#8c8c8c] bg-white">
      <div className="flex h-[28px] pl-[5px]">
        <div className="-mt-[2px]"><Globe /></div>
        <Fit w={277} className="-mt-[8px] ml-[5px] h-[28px] font-['Open_Sans',sans-serif] text-[18px] leading-[27px] font-light text-[#808080] [-webkit-text-stroke:0.2px_#808080]">*** 2 : Algorithm Not Yet Saved ***</Fit>
        <div className="-mt-[4px] ml-[100px]"><WinButtons color="#888" /></div>
      </div>
      <div className="flex h-[574px]">
        <svg width="567" height="574" className="block shrink-0">
          <defs>
            <pattern id="hatch" width="12" height="12" patternUnits="userSpaceOnUse">
              <rect width="12" height="12" fill="#000" />
              <path d="M-1-1l14 14M13-1L-1 13" stroke="#868686" strokeWidth="1.300" />
            </pattern>
          </defs>
          <rect width="567" height="574" fill="url(#hatch)" />
        </svg>
        <div className={"flex w-[26px] flex-col justify-between pl-px " + TRACK}>
          <SB d="u" />
          <SB d="d" />
        </div>
      </div>
      <div className="flex h-[26px]">
        <div className={"flex w-[567px] justify-between " + TRACK}>
          <span className="-ml-[8px]"><SB d="l" /></span>
          <SB d="r" />
        </div>
        <div className="w-[26px] bg-[#808080]" />
      </div>
    </div>
  );
}

const NOTE = "block font-['Liberation_Sans',sans-serif] font-bold text-[35px] leading-[51px] tracking-[1.500px] [word-spacing:2px] text-[#ed1c24] [-webkit-text-stroke:2px_#ed1c24]";

export default function App() {
  return (
    <div className="relative h-[1009px] w-[1911px] overflow-hidden bg-[#f0f0f0] font-['Liberation_Sans',sans-serif] text-[18px] leading-[24px] text-[#111]">
      <div className="flex h-[26px] justify-end bg-white pr-[26px]">
        <div className="-mt-[5px]"><WinButtons color="#888" /></div>
      </div>
      <div className="pt-[34.500px]">
        {ROWS.map((r, i) => (
          <ToolRow key={i} items={r} />
        ))}
      </div>

      <AlgorithmView />

      <div className="absolute top-[61px] left-[636px]">
        <Fit w={469} className={NOTE}>1. Right click layer-&gt;red</Fit>
        <Fit w={731} className={NOTE}>repeat to make red, green, blue layer</Fit>
        <Fit w={316} className={NOTE}>2. Enter dataset</Fit>
      </div>

      <Dialog />
      <ContextMenu />

      <div className="absolute top-[581px] left-[1035px] h-[59px] w-[205px] border-[5px] border-[#ed1c24]" />
      <div className="absolute top-[509px] left-[1273px] h-[55px] w-[93px] border-[5px] border-[#ed1c24]" />
      <div className="absolute top-[635px] left-[1049px]">
        <Fit w={22} className={NOTE}>1</Fit>
      </div>
      <div className="absolute top-[441px] left-[1317px]">
        <Fit w={23} className={NOTE}>2</Fit>
      </div>
    </div>
  );
}
